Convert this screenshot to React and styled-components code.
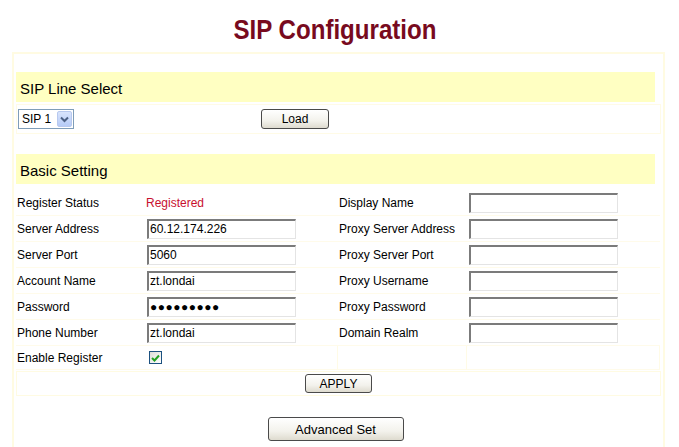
import React from 'react';
import styled, { createGlobalStyle } from 'styled-components';

const GlobalStyle = createGlobalStyle`
  body {
    margin: 0;
    background: #fff;
    font-family: "Liberation Sans", Arial, sans-serif;
    color: #000;
  }
`;

const Page = styled.div`
  width: 679px;
  height: 447px;
  overflow: hidden;
`;

const Title = styled.h1`
  margin: 0;
  height: 52px;
  padding-right: 10px;
  display: flex;
  align-items: center;
  justify-content: center;
  font-size: 28px;
  font-weight: bold;
  color: #780a1e;
  span {
    display: inline-block;
    transform: scaleX(0.86);
    margin-top: 8px;
  }
`;

const Frame = styled.div`
  margin: 0 14px 0 12px;
  border: 2px solid #fffbe2;
  border-bottom: none;
  padding: 18px 2px 0 2px;
  height: 400px;
`;

const SectionHeader = styled.div`
  width: 639px;
  height: 30px;
  background: #ffffc2;
  display: flex;
  align-items: center;
  padding: 2px 0 0 4px;
  box-sizing: border-box;
  font-size: 15px;
  margin-top: ${p => p.$top || 0}px;
`;

const LineRow = styled.div`
  margin-top: 2px;
  height: 30px;
  border: 1px solid #fffbe6;
  box-sizing: border-box;
  display: grid;
  grid-template-columns: 244px auto;
  align-items: center;
`;

const Select = styled.div`
  width: 56px;
  height: 20px;
  margin-left: 1px;
  border: 1px solid #7f9db9;
  box-sizing: border-box;
  display: flex;
  align-items: center;
  justify-content: space-between;
  font-size: 12px;
  padding-left: 3px;
  background: #fff;
`;

const Arrow = styled.div`
  width: 15px;
  height: 16px;
  margin-right: 1px;
  border-radius: 2px;
  background: linear-gradient(#d9e4fc, #b6cbf7);
  border: 1px solid #b8c9ef;
  box-sizing: border-box;
  display: flex;
  align-items: center;
  justify-content: center;
`;

const Button = styled.button`
  width: ${p => p.$w}px;
  height: ${p => p.$h || 20}px;
  font-family: "Liberation Sans", Arial, sans-serif;
  font-size: ${p => p.$fs || 12}px;
  color: #000;
  border: 1px solid #4a4a4a;
  border-radius: 3px;
  background: linear-gradient(#ffffff, #f3f2ec 60%, #dedbcf);
  padding: 0;
`;

const Settings = styled.div`
  margin-top: 6px;
  display: grid;
  grid-template-columns: 129px 193px 129px 193px;
  grid-auto-rows: 26px;
`;

const Cell = styled.div`
  display: flex;
  align-items: center;
  font-size: 12px;
  padding-left: ${p => (p.$input ? 2 : 1)}px;
  border-bottom: 1px solid #fffbea;
  border-right: ${p => (p.$edge ? '1px solid #fffbe6' : 'none')};
  box-sizing: border-box;
  color: ${p => (p.$status ? '#c8102e' : '#000')};
  height: ${p => (p.$short ? 24 : 26)}px;
`;

const Input = styled.div`
  width: 149px;
  height: 20px;
  box-sizing: border-box;
  border-top: 2px solid #7b7b7b;
  border-left: 2px solid #7b7b7b;
  border-right: 1px solid #e4e4e4;
  border-bottom: 1px solid #e4e4e4;
  background: #fff;
  font-size: 12px;
  display: flex;
  align-items: center;
  padding-left: 1px;
  letter-spacing: ${p => (p.$dots ? '0.5px' : '0')};
`;

const Check = styled.div`
  width: 13px;
  height: 13px;
  margin-left: 2px;
  border: 1px solid #1c5180;
  box-sizing: border-box;
  background: linear-gradient(135deg, #dcdcd7, #fff);
  display: flex;
  align-items: center;
  justify-content: center;
`;

const ApplyRow = styled.div`
  height: 25px;
  margin-top: -1px;
  border: 1px solid #fffbe2;
  box-sizing: border-box;
  display: flex;
  align-items: center;
  justify-content: center;
  width: 645px;
`;

const AdvancedRow = styled.div`
  padding-top: 21px;
  display: flex;
  justify-content: center;
  padding-right: 6px;
`;

const rows = [
  ['Register Status', { status: 'Registered' }, 'Display Name', ''],
  ['Server Address', '60.12.174.226', 'Proxy Server Address', ''],
  ['Server Port', '5060', 'Proxy Server Port', ''],
  ['Account Name', 'zt.londai', 'Proxy Username', ''],
  ['Password', { dots: '●●●●●●●●●' }, 'Proxy Password', ''],
  ['Phone Number', 'zt.londai', 'Domain Realm', ''],
];

export default function App() {
  return (
    <Page>
      <GlobalStyle />
      <Title><span>SIP Configuration</span></Title>
      <Frame>
        <SectionHeader>SIP Line Select</SectionHeader>
        <LineRow>
          <Select>
            SIP 1
            <Arrow>
              <svg width="9" height="7" viewBox="0 0 9 7">
                <path d="M1 1.5 L4.5 5 L8 1.5" fill="none" stroke="#4d6185" strokeWidth="2" />
              </svg>
            </Arrow>
          </Select>
          <Button $w={68}>Load</Button>
        </LineRow>

        <SectionHeader $top={20}>Basic Setting</SectionHeader>
        <Settings>
          {rows.map(([l1, v1, l2]) => (
            <React.Fragment key={l1}>
              <Cell>{l1}</Cell>
              {v1.status ? (
                <Cell $status>{v1.status}</Cell>
              ) : (
                <Cell $input>
                  <Input $dots={!!v1.dots}>{v1.dots ? v1.dots : v1}</Input>
                </Cell>
              )}
              <Cell>{l2}</Cell>
              <Cell $input><Input /></Cell>
            </React.Fragment>
          ))}
          <Cell $short>Enable Register</Cell>
          <Cell $short $input $edge>
            <Check>
              <svg width="9" height="8" viewBox="0 0 9 8">
                <path d="M1 4 L3.5 6.5 L8 1.5" fill="none" stroke="#21a121" strokeWidth="2" />
              </svg>
            </Check>
          </Cell>
          <Cell $short $edge />
          <Cell $short $edge />
        </Settings>
        <ApplyRow>
          <Button $w={67} $h={19}>APPLY</Button>
        </ApplyRow>
        <AdvancedRow>
          <Button $w={136} $h={24} $fs={13}>Advanced Set</Button>
        </AdvancedRow>
      </Frame>
    </Page>
  );
}
